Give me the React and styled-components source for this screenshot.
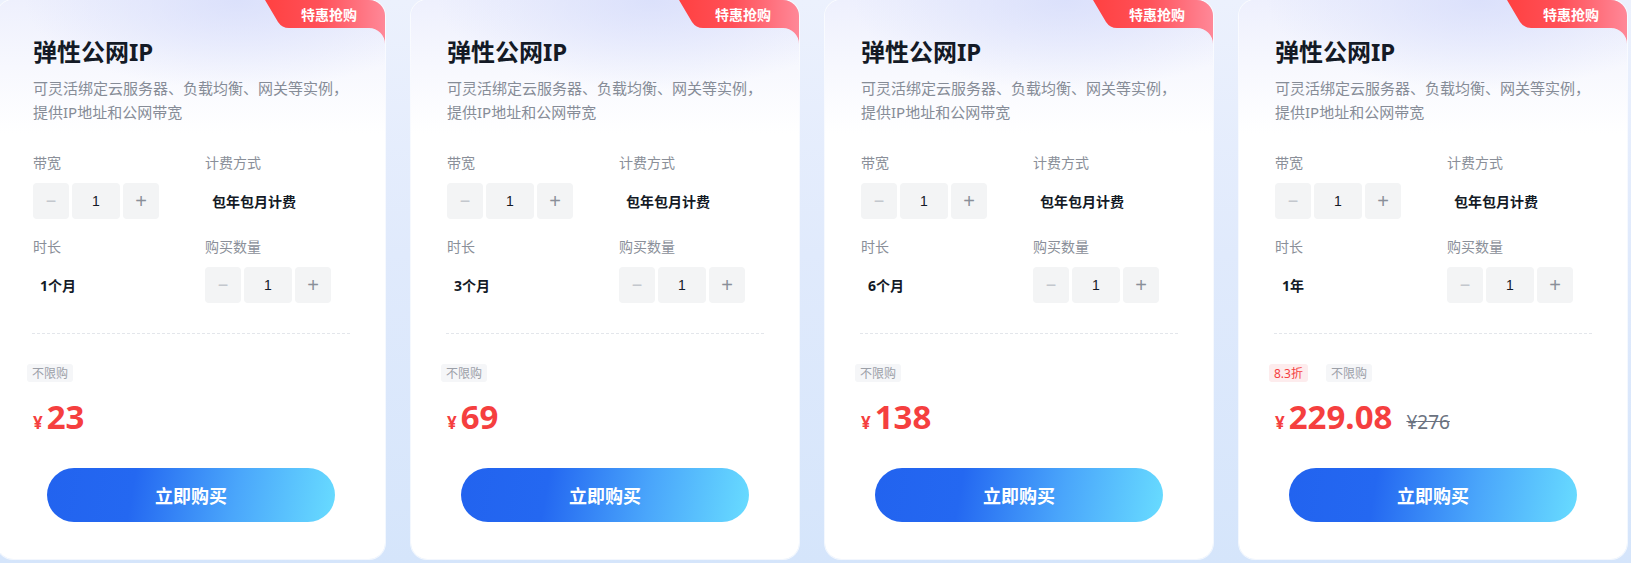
import styled, { createGlobalStyle } from "styled-components";

const GlobalStyle = createGlobalStyle`
  html, body {
    margin: 0;
    padding: 0;
  }
  body {
    background: linear-gradient(180deg, #ecf1fd 0%, #e0eafc 45%, #d5e5fb 100%);
    font-family: "Noto Sans", "Noto Sans CJK SC", sans-serif;
    overflow: hidden;
  }
`;

const Row = styled.div`
  display: flex;
  gap: 26px;
  margin-left: -3px;
  height: 563px;
  padding-bottom: 4px;
  box-sizing: border-box;
`;

const Card = styled.div`
  position: relative;
  flex: 0 0 388px;
  box-sizing: border-box;
  display: flex;
  flex-direction: column;
  padding: 36px 36px 0;
  border-radius: 16px;
  overflow: hidden;
  background:
    radial-gradient(ellipse 55% 90px at 62% 0%, rgba(216, 222, 251, 0.85), rgba(255, 255, 255, 0)),
    linear-gradient(180deg, #eef0fd 0%, #f7f8fe 12%, #ffffff 24%);
  box-shadow: 0 0 0 1px rgba(255, 255, 255, 0.7);
`;

const Badge = styled.div`
  position: absolute;
  top: 0;
  right: 0;
  width: 120px;
  height: 44px;

  svg {
    position: absolute;
    inset: 0;
  }

  span {
    position: relative;
    display: flex;
    align-items: center;
    justify-content: center;
    height: 27px;
    padding-left: 8px;
    color: #fff;
    font-size: 14px;
    font-weight: 700;
  }
`;

const Title = styled.h2`
  margin: 0;
  font-size: 24px;
  line-height: 32px;
  font-weight: 700;
  color: #141a26;
`;

const Desc = styled.p`
  margin: 8px 0 0;
  font-size: 15px;
  line-height: 24px;
  color: #868c97;
`;

const Fields = styled.div`
  display: grid;
  grid-template-columns: 172px 1fr;
  row-gap: 18px;
  margin-top: 29px;
`;

const Field = styled.div`
  display: flex;
  flex-direction: column;
  gap: 10px;
`;

const Label = styled.div`
  font-size: 14px;
  line-height: 20px;
  color: #8a8f99;
`;

const Value = styled.div`
  height: 36px;
  display: flex;
  align-items: center;
  padding-left: 7px;
  font-size: 14px;
  font-weight: 700;
  color: #141a26;
`;

const Stepper = styled.div`
  display: flex;
  gap: 3px;
`;

const StepBtn = styled.div`
  width: ${({ $w }) => $w}px;
  height: 36px;
  display: flex;
  align-items: center;
  justify-content: center;
  border-radius: 4px;
  background: #f3f4f5;
  color: ${({ $c }) => $c};
  font-family: "Liberation Sans", Arial, sans-serif;
  font-size: ${({ $fs }) => $fs}px;
`;

const Divider = styled.div`
  margin: 30px -1px 0;
  border-top: 1px dashed #e3e6eb;
`;

const Tags = styled.div`
  display: flex;
  gap: 18px;
  margin: 30px 0 0 -6px;
`;

const Tag = styled.span`
  height: 18px;
  padding: 0 5px;
  display: flex;
  align-items: center;
  border-radius: 3px;
  font-size: 12px;
  background: ${({ $red }) => ($red ? "#fdeced" : "#f5f6f8")};
  color: ${({ $red }) => ($red ? "#f53f3f" : "#9ca0a8")};
`;

const PriceRow = styled.div`
  display: flex;
  align-items: baseline;
  margin-top: 14px;
  height: 42px;
  color: #f53f3f;
  font-weight: 700;
`;

const Yen = styled.span`
  font-size: 17px;
  margin-right: 4px;
`;

const Amount = styled.span`
  font-size: 33px;
  line-height: 42px;
`;

const OldPrice = styled.span`
  margin-left: 14px;
  font-size: 19px;
  font-weight: 400;
  color: #6b7280;
  text-decoration: line-through;
`;

const BuyButton = styled.button`
  align-self: center;
  margin-top: 30px;
  width: 288px;
  height: 54px;
  border: none;
  border-radius: 27px;
  background: linear-gradient(100deg, #2263ef 0%, #2468f1 30%, #4aa6fb 65%, #68dcff 100%);
  color: #fff;
  font-family: "Noto Sans CJK SC", sans-serif;
  font-size: 18px;
  font-weight: 700;
  cursor: pointer;
`;

const plans = [
  { time: "1个月", price: "23" },
  { time: "3个月", price: "69" },
  { time: "6个月", price: "138" },
  { time: "1年", price: "229.08", discount: "8.3折", old: "276" },
];

function BadgeShape() {
  return (
    <svg width="120" height="44" viewBox="0 0 120 44">
      <defs>
        <linearGradient id="badgeGrad" x1="0" y1="0" x2="1" y2="0">
          <stop offset="0" stopColor="#ff4141" />
          <stop offset="0.45" stopColor="#ff5058" />
          <stop offset="1" stopColor="#ff8898" />
        </linearGradient>
      </defs>
      <path
        d="M0 0 H120 V44 A16 16 0 0 0 104 28 H24 Q17 28 13 22 Z"
        fill="url(#badgeGrad)"
      />
    </svg>
  );
}

function Counter() {
  return (
    <Stepper>
      <StepBtn $w={36} $c="#c3c7cd" $fs={18}>−</StepBtn>
      <StepBtn $w={48} $c="#141a26" $fs={14}>1</StepBtn>
      <StepBtn $w={36} $c="#8a8f99" $fs={20}>+</StepBtn>
    </Stepper>
  );
}

export default function App() {
  return (
    <>
      <GlobalStyle />
      <Row>
        {plans.map((p) => (
          <Card key={p.time}>
            <Badge>
              <BadgeShape />
              <span>特惠抢购</span>
            </Badge>
            <Title>弹性公网IP</Title>
            <Desc>
              可灵活绑定云服务器、负载均衡、网关等实例，
              <br />
              提供IP地址和公网带宽
            </Desc>
            <Fields>
              <Field>
                <Label>带宽</Label>
                <Counter />
              </Field>
              <Field>
                <Label>计费方式</Label>
                <Value>包年包月计费</Value>
              </Field>
              <Field>
                <Label>时长</Label>
                <Value>{p.time}</Value>
              </Field>
              <Field>
                <Label>购买数量</Label>
                <Counter />
              </Field>
            </Fields>
            <Divider />
            <Tags>
              {p.discount && <Tag $red>{p.discount}</Tag>}
              <Tag>不限购</Tag>
            </Tags>
            <PriceRow>
              <Yen>¥</Yen>
              <Amount>{p.price}</Amount>
              {p.old && <OldPrice>¥{p.old}</OldPrice>}
            </PriceRow>
            <BuyButton>立即购买</BuyButton>
          </Card>
        ))}
      </Row>
    </>
  );
}
